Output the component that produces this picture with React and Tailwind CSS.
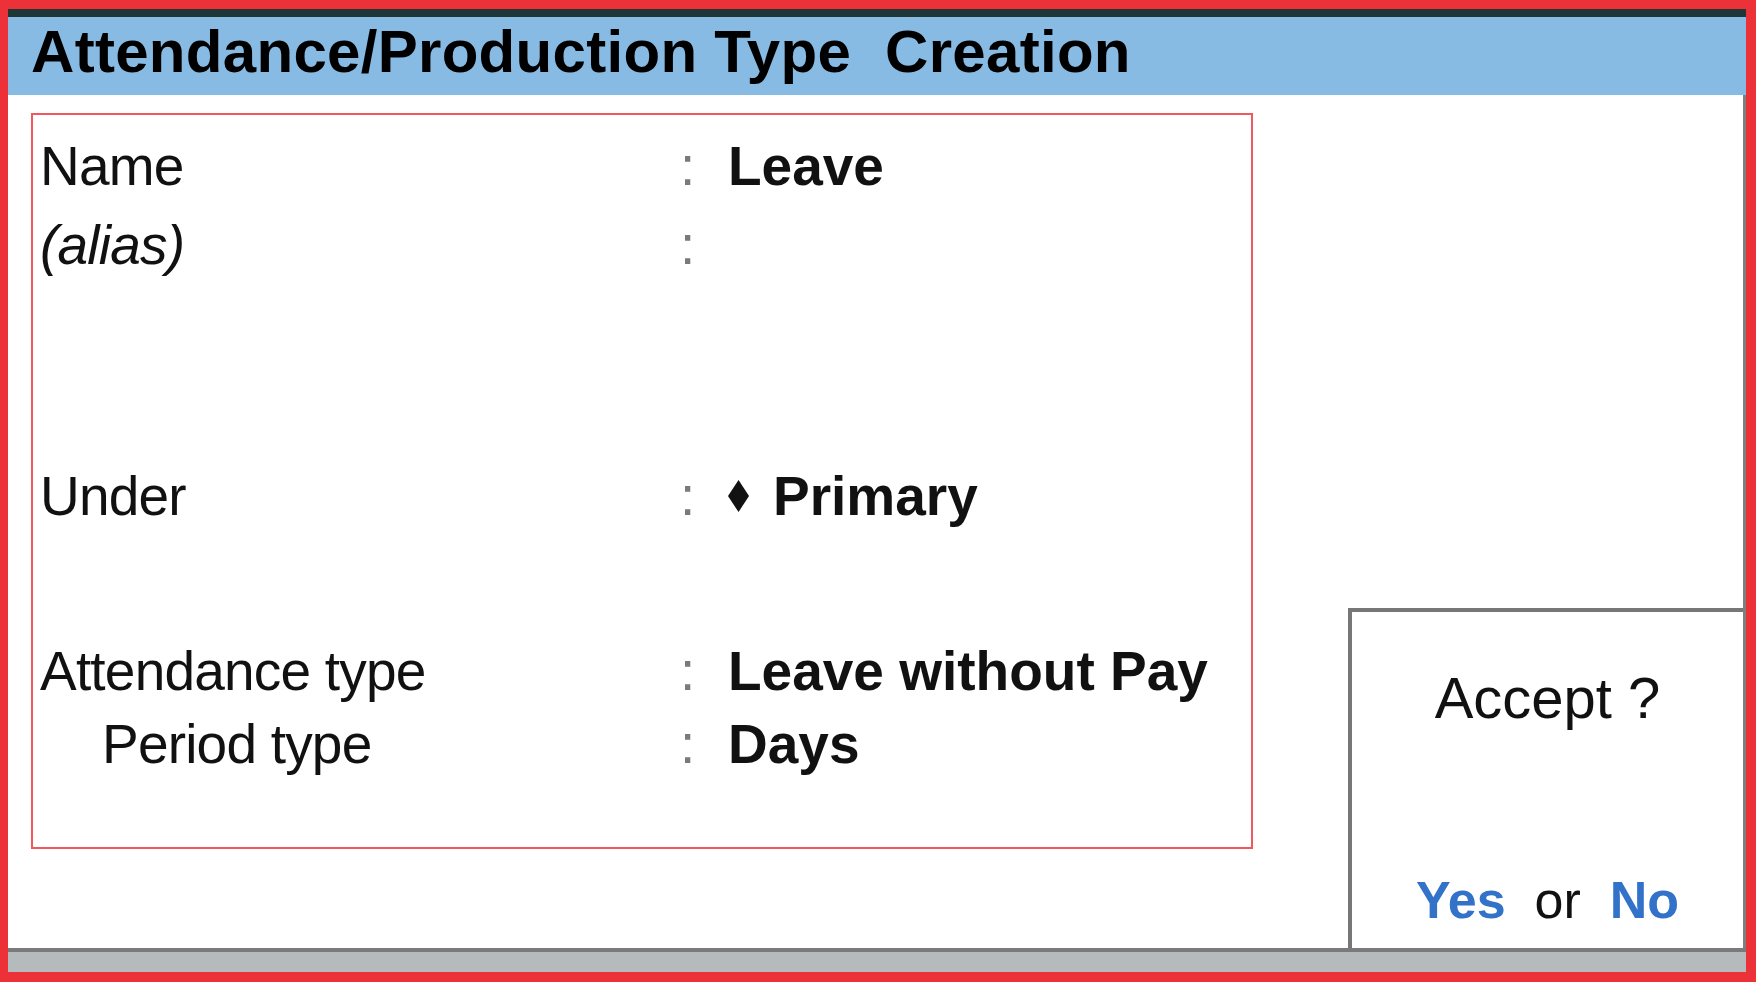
import React from "react";

const FONT = "[font-family:'Liberation_Sans',Arial,sans-serif]";

function Row({ label, labelClass = "", value, valueNode, className = "" }) {
  return (
    <div className={`flex items-baseline h-[73px] leading-[73px] ${className}`}>
      <span className={`w-[640px] text-[55px] tracking-[-0.8px] text-[#111] ${labelClass}`}>{label}</span>
      <span className="w-[48px] text-[55px] text-[#7a7a7a]">:</span>
      {valueNode ? valueNode : <span className="text-[55px] font-bold text-[#111]">{value}</span>}
    </div>
  );
}

export default function App() {
  return (
    <div className={`w-[1756px] h-[982px] bg-[#ec3138] pt-[9px] pl-[8px] pr-[10px] pb-[10px] flex flex-col overflow-hidden ${FONT}`}>
      <div className="h-[8px] bg-[#1f3636]" />
      <div className="h-[78px] bg-[#88bbe3] pl-[23px] pt-[5px]">
        <h1 className="text-[60px] leading-none font-bold tracking-[0.3px] text-black whitespace-pre">Attendance/Production Type  Creation</h1>
      </div>
      <div className="h-[853px] flex bg-white border-r-[3px] border-[#7f7f7f]">
        <div className="pl-[23px] pt-[18px]">
          <div className="w-[1222px] h-[736px] border-2 border-[#f1575c] pt-[15px] pl-[7px]">
            <Row label="Name" value="Leave" />
            <Row label="(alias)" labelClass="italic" value="" className="mt-[6px]" />
            <Row
              label="Under"
              className="mt-[178px]"
              valueNode={
                <span className="text-[55px] font-bold text-[#111] whitespace-nowrap">
                  <svg width="21" height="32" viewBox="0 0 21 32" className="inline-block align-baseline mb-[3px] mr-[24px]">
                    <polygon points="10.5,0 21,16 10.5,32 0,16" fill="#111" />
                  </svg>
                  Primary
                </span>
              }
            />
            <Row label="Attendance type" value="Leave without Pay" className="mt-[102px]" />
            <Row label="Period type" labelClass="pl-[62px]" value="Days" />
          </div>
        </div>
        <div className="flex-1 flex flex-col justify-end">
          <div className="ml-auto w-[395px] h-[340px] border-l-4 border-t-4 border-[#777] flex flex-col items-center">
            <div className="mt-[57px] text-[58px] leading-none text-[#111]">Accept ?</div>
            <div className="mt-[147px] text-[52px] leading-none whitespace-pre">
              <span className="font-bold text-[#3272c9]">Yes</span>
              <span className="text-[#111]">  or  </span>
              <span className="font-bold text-[#3272c9]">No</span>
            </div>
          </div>
        </div>
      </div>
      <div className="h-[24px] bg-[#b5babd] border-t-4 border-[#7a7a7a]" />
    </div>
  );
}
